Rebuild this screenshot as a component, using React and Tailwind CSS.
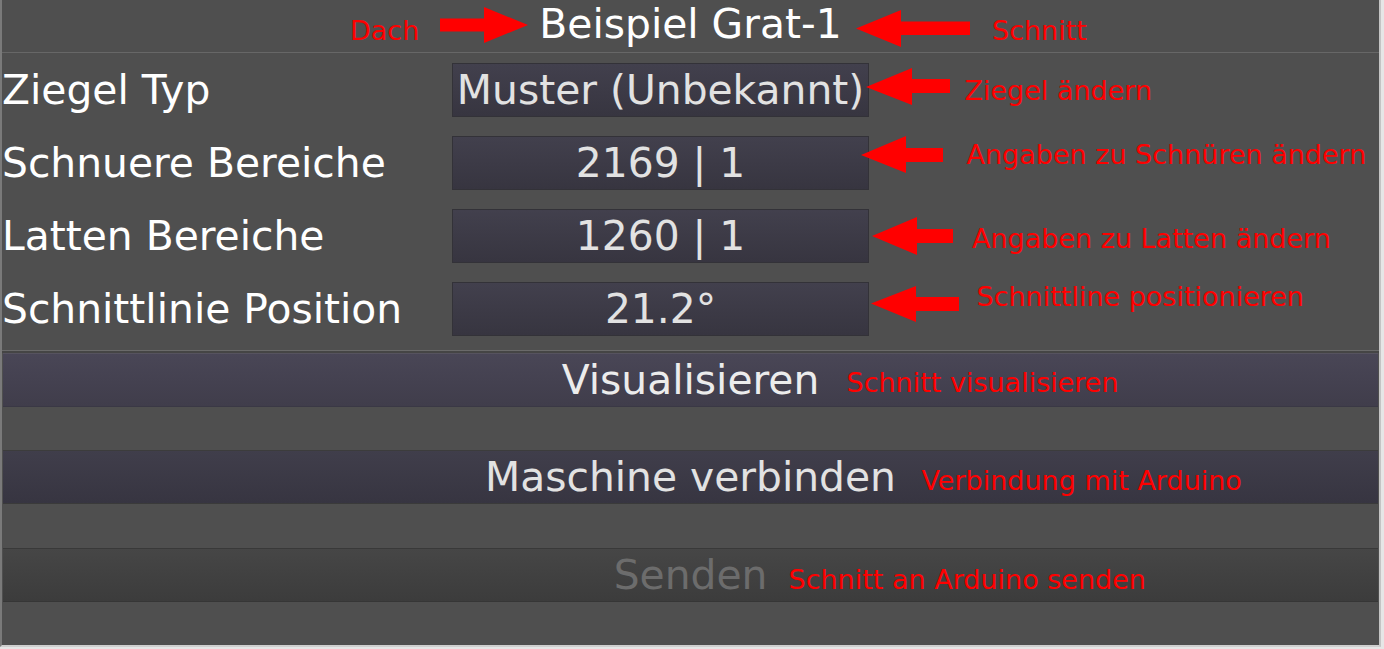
export default function App() {
  const rows = [
    { label: "Ziegel Typ", value: "Muster (Unbekannt)" },
    { label: "Schnuere Bereiche", value: "2169 | 1" },
    { label: "Latten Bereiche", value: "1260 | 1" },
    { label: "Schnittlinie Position", value: "21.2°" },
  ];
  const notes = [
    { t: "Dach", x: 350, y: 17 },
    { t: "Schnitt", x: 992, y: 16.5 },
    { t: "Ziegel ändern", x: 964.5, y: 77 },
    { t: "Angaben zu Schnüren ändern", x: 966.5, y: 140.5 },
    { t: "Angaben zu Latten ändern", x: 972, y: 224.5 },
    { t: "Schnittline positionieren", x: 976.5, y: 283 },
    { t: "Schnitt visualisieren", x: 846.5, y: 369 },
    { t: "Verbindung mit Arduino", x: 921.5, y: 466.5 },
    { t: "Schnitt an Arduino senden", x: 788.5, y: 566 },
  ];
  return (
    <div className="relative w-[1384px] h-[649px] bg-[#e6e6e6] overflow-hidden font-['DejaVu_Sans',sans-serif]">
      <div className="w-[1381px] h-[647px] bg-[#4f4f4f] border-l-2 border-r-2 border-b-2 border-l-[#7a7a7a] border-r-[#c4c4c4] border-b-[#cfcfcf] flex flex-col">
        <div className="h-[53px] shrink-0 border-b border-[#676767] flex justify-center">
          <span className="text-[40.8px] leading-none text-white pt-[4px]">Beispiel Grat-1</span>
        </div>
        <div className="flex flex-col gap-[19px] pt-[10px] pb-[14px]">
          {rows.map((r) => (
            <div key={r.label} className="flex items-center h-[54px]">
              <div className="w-[450px] pt-[1px] text-[40.8px] leading-none text-white whitespace-nowrap">{r.label}</div>
              <div className="w-[417px] h-[54px] border border-[#333238] bg-linear-to-b from-[#42404d] to-[#373540] flex items-center justify-center pt-[1px] text-[40.8px] leading-none text-[#e2e2e2] whitespace-nowrap overflow-visible">
                {r.value}
              </div>
            </div>
          ))}
        </div>
        <div className="h-[1px] bg-[#6a6a6a]" />
        <div className="h-[2px] bg-[#454545]" />
        <div className="flex flex-col px-[1px]">
          <div className="h-[54px] border-t border-b border-t-[#56535f] border-b-[#3a3845] bg-linear-to-b from-[#494656] to-[#403d4b] flex items-center justify-center text-[40.8px] leading-none text-[#ececec]">
            Visualisieren
          </div>
          <div className="h-[43px]" />
          <div className="h-[54px] border-t border-b border-t-[#3c3c3c] border-b-[#3a3a3a] bg-linear-to-b from-[#403e4b] to-[#373541] flex items-center justify-center text-[40.8px] leading-none text-[#e2e2e2]">
            Maschine verbinden
          </div>
          <div className="h-[44px]" />
          <div className="h-[54px] border-t border-b border-t-[#393939] border-b-[#363636] bg-linear-to-b from-[#464646] to-[#3c3c3c] flex items-center justify-center text-[40.8px] leading-none text-[#6c6c6c]">
            Senden
          </div>
        </div>
      </div>

      <svg className="absolute left-0 top-0 pointer-events-none" width="1384" height="649" viewBox="0 0 1384 649">
        <g fill="#ff0000">
          <polygon points="440,18.5 484,18.5 484,7 528,25 484,43 484,31.5 440,31.5" />
          <polygon points="856,28.5 901,10 901,21.5 970,21.5 970,35 901,35 901,47" />
          <polygon points="866,87 912,68 912,79 950,79 950,93 912,93 912,105" />
          <polygon points="861,155 906,136 906,148 943,148 943,162 906,162 906,173" />
          <polygon points="872,236 917,217 917,229 953,229 953,243 917,243 917,255" />
          <polygon points="871,303.5 916,286 916,297 959,297 959,311 916,311 916,322" />
        </g>
      </svg>
      {notes.map((n) => (
        <span
          key={n.t}
          className="absolute text-[27px] leading-none text-[#ff0000] whitespace-nowrap"
          style={{ left: n.x, top: n.y }}
        >
          {n.t}
        </span>
      ))}
    </div>
  );
}
